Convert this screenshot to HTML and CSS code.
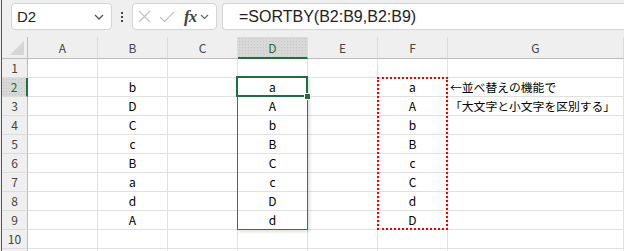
FILE: index.html
```html
<!DOCTYPE html>
<html lang="ja">
<head>
<meta charset="UTF-8">
<title>SORTBY</title>
<link rel="stylesheet" href="styles.css">
</head>
<body>

<div class="app">
<div class="toolbar">
    <div class="namebox">
        <span>D2</span>
        <svg class="chev" width="10" height="6" viewBox="0 0 10 6"><path d="M1 1 L5 5 L9 1" fill="none" stroke="#555" stroke-width="1.3"/></svg>
    </div>
    <div class="dots"><i></i><i></i><i></i></div>
    <div class="fxbox">
        <svg width="13" height="13" viewBox="0 0 13 13"><path d="M1 1 L12 12 M12 1 L1 12" stroke="#c3c3c3" stroke-width="1.2"/></svg>
        <svg class="check" width="16" height="12" viewBox="0 0 16 12"><path d="M1 6 L5.5 10.5 L15 1" fill="none" stroke="#c3c3c3" stroke-width="1.2"/></svg>
        <span class="fx">fx</span>
        <svg class="chev-s" width="9" height="6" viewBox="0 0 9 6"><path d="M1 1 L4.5 4.5 L8 1" fill="none" stroke="#666" stroke-width="1.1"/></svg>
    </div>
    <div class="formula">=SORTBY(B2:B9,B2:B9)</div>
</div>

<div class="sheet">
    <div class="corner"><span class="tri"></span></div>
    <div class="ch">A</div><div class="ch">B</div><div class="ch">C</div><div class="ch sel">D</div><div class="ch">E</div><div class="ch">F</div><div class="ch">G</div>

    <div class="rh">1</div><div class="c"></div><div class="c"></div><div class="c"></div><div class="c"></div><div class="c"></div><div class="c"></div><div class="c"></div>
    <div class="rh sel">2</div><div class="c"></div><div class="c">b</div><div class="c"></div><div class="c">a</div><div class="c"></div><div class="c">a</div><div class="c note">←並べ替えの機能で</div>
    <div class="rh">3</div><div class="c"></div><div class="c">D</div><div class="c"></div><div class="c">A</div><div class="c"></div><div class="c">A</div><div class="c note">「大文字と小文字を区別する」</div>
    <div class="rh">4</div><div class="c"></div><div class="c">C</div><div class="c"></div><div class="c">b</div><div class="c"></div><div class="c">b</div><div class="c"></div>
    <div class="rh">5</div><div class="c"></div><div class="c">c</div><div class="c"></div><div class="c">B</div><div class="c"></div><div class="c">B</div><div class="c"></div>
    <div class="rh">6</div><div class="c"></div><div class="c">B</div><div class="c"></div><div class="c">C</div><div class="c"></div><div class="c">c</div><div class="c"></div>
    <div class="rh">7</div><div class="c"></div><div class="c">a</div><div class="c"></div><div class="c">c</div><div class="c"></div><div class="c">C</div><div class="c"></div>
    <div class="rh">8</div><div class="c"></div><div class="c">d</div><div class="c"></div><div class="c">D</div><div class="c"></div><div class="c">d</div><div class="c"></div>
    <div class="rh">9</div><div class="c"></div><div class="c">A</div><div class="c"></div><div class="c">d</div><div class="c"></div><div class="c">D</div><div class="c"></div>
    <div class="rh">10</div><div class="c"></div><div class="c"></div><div class="c"></div><div class="c"></div><div class="c"></div><div class="c"></div><div class="c"></div>
    <div class="rh"></div><div class="c"></div><div class="c"></div><div class="c"></div><div class="c"></div><div class="c"></div><div class="c"></div><div class="c"></div>

    <div class="spill"></div>
    <div class="marked"></div>
    <div class="active"><span class="handle"></span></div>
</div>
</div>

</body>
</html>
```

FILE: styles.css
```css
body { margin: 0; background: #efefef; overflow: hidden; font-family: "Noto Sans CJK JP", "Liberation Sans", sans-serif; }
.app { margin-left: 1px; border-left: 1px solid #217346; height: 251px; overflow: hidden; }

.toolbar { height: 37px; box-sizing: border-box; display: flex; align-items: flex-start; padding: 3px 0 0 9px; background: #efefef; }
.namebox { width: 101px; height: 27px; box-sizing: border-box; background: #fff; border: 1px solid #d4d4d4; border-radius: 4px; display: flex; align-items: center; justify-content: space-between; padding: 0 7px 0 5px; font: 15px "Liberation Sans", sans-serif; color: #222; }
.dots { width: 2px; margin: 9px 9px 0 9px; display: flex; flex-direction: column; gap: 2px; }
.dots i { display: block; width: 2px; height: 2px; background: #444; }
.fxbox { width: 85px; height: 27px; box-sizing: border-box; background: #fff; border: 1px solid #d4d4d4; border-radius: 4px; display: flex; align-items: center; padding-left: 5px; }
.fxbox .check { margin-left: 8px; }
.fx { font: italic bold 17px "Liberation Serif", serif; color: #444; margin-left: 9px; letter-spacing: -1px; }
.chev-s { margin-left: 4px; }
.formula { flex: 1; height: 27px; box-sizing: border-box; margin-left: 5px; background: #fff; border: 1px solid #d4d4d4; border-right: none; border-radius: 4px 0 0 4px; padding-left: 16px; font: 16px/25px "Liberation Sans", sans-serif; color: #222; }

.sheet { position: relative; display: grid; grid-template-columns: 26px repeat(6, 70px) 1fr; grid-template-rows: 22px; grid-auto-rows: 19px; background: #fff; font-size: 12px; color: #000; }
.sheet > div { box-sizing: border-box; }
.corner { background: #efefef; border-right: 1px solid #bdbdbd; border-bottom: 1px solid #bdbdbd; position: relative; }
.tri { position: absolute; right: 3px; bottom: 3px; width: 0; height: 0; border-left: 14px solid transparent; border-bottom: 14px solid #d6d6d6; }
.ch { background: #efefef; border-bottom: 1px solid #bdbdbd; border-right: 1px solid #dcdcdc; text-align: center; line-height: 21px; color: #444; }
.rh { background: #efefef; border-right: 1px solid #bdbdbd; border-bottom: 1px solid #dcdcdc; text-align: center; line-height: 18px; color: #444; }
.ch.sel, .rh.sel { background-color: #d8d8d8; background-image: radial-gradient(circle, #c6c6c6 0.6px, transparent 0.8px); background-size: 3px 3px; color: #1e6b40; }
.ch.sel { border-bottom: 2px solid #1e6f42; }
.rh.sel { border-right: 2px solid #1e6f42; }
.c { border-right: 1px solid #e1e1e1; border-bottom: 1px solid #e1e1e1; text-align: center; line-height: 18px; white-space: nowrap; }
.c.note { text-align: left; padding-left: 2px; font-size: 11.8px; }

.spill { position: absolute; left: 235px; top: 40px; width: 71px; height: 153px; box-sizing: border-box; border: 1px solid #2f62c0; box-shadow: 2px 2px 3px rgba(0,0,0,0.12); }
.marked { position: absolute; left: 375px; top: 40px; width: 71px; height: 153px; box-sizing: border-box; border: 2px dotted #f00000; }
.active { position: absolute; left: 234px; top: 39px; width: 72px; height: 21px; box-sizing: border-box; border: 2px solid #1e6f42; }
.handle { position: absolute; right: -5px; bottom: -5px; width: 7px; height: 7px; box-sizing: border-box; background: #1e6f42; border: 1px solid #fff; }
```
